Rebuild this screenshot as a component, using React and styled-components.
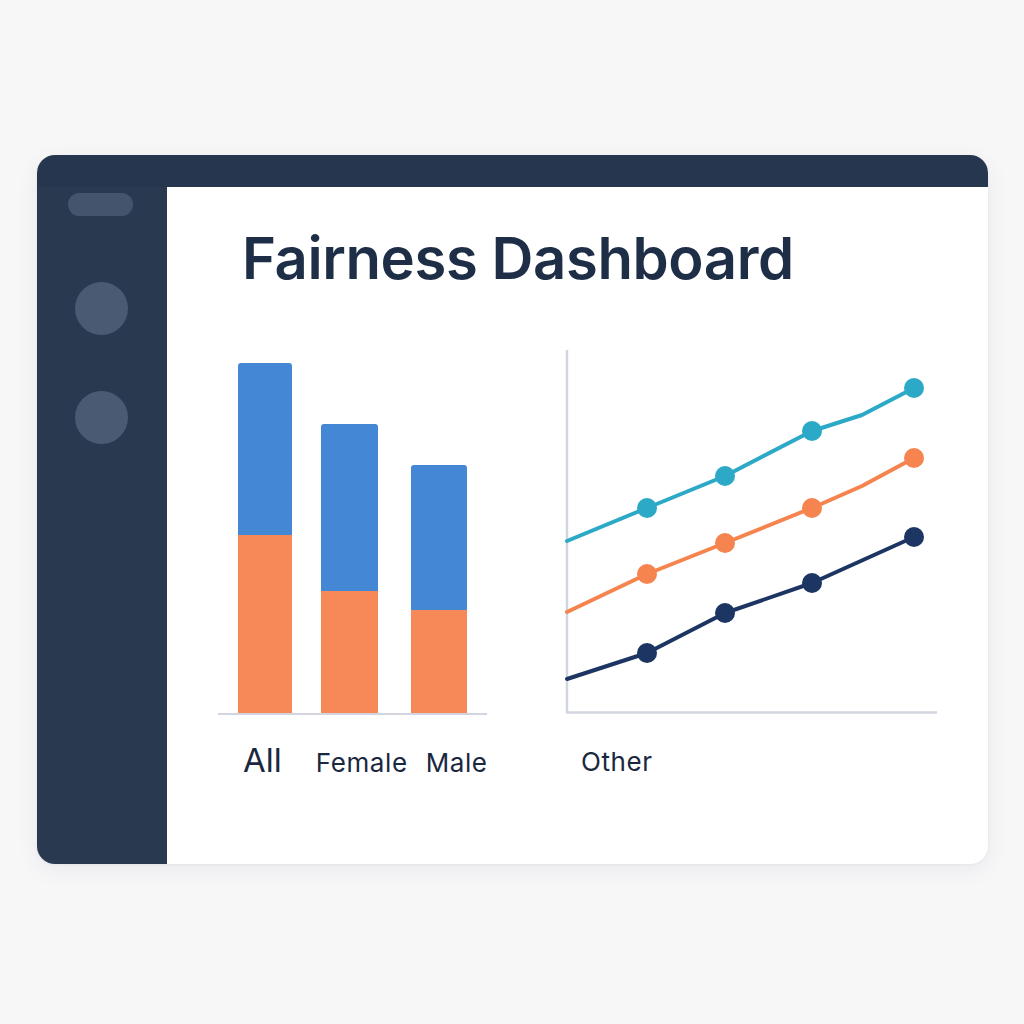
import React from 'react'
import styled, {createGlobalStyle} from 'styled-components'

const bars = [
  {label: 'All', total: 350, low: 178, width: 54, gap: 20, big: true, labelOffset: 25},
  {label: 'Female', total: 289, low: 122, width: 57, gap: 29, labelOffset: 34},
  {label: 'Male', total: 248, low: 103, width: 56, gap: 33, labelOffset: 18}
]

const series = [
  {
    color: '#2ba9c6',
    line: [[567, 541], [647, 508], [725, 476], [812, 431], [862, 415], [914, 388]],
    dots: [[647, 508], [725, 476], [812, 431], [914, 388]]
  },
  {
    color: '#f6844f',
    line: [[567, 612], [647, 574], [725, 543], [812, 508], [862, 486], [914, 458]],
    dots: [[647, 574], [725, 543], [812, 508], [914, 458]]
  },
  {
    color: '#1d3562',
    line: [[567, 679], [647, 653], [725, 613], [812, 583], [914, 537]],
    dots: [[647, 653], [725, 613], [812, 583], [914, 537]]
  }
]

export default function App() {
  return (
    <>
      <GlobalStyle />
      <Page>
        <Window>
          <TopBar />
          <Body>
            <Sidebar>
              <Pill />
              <NavDot />
              <NavDot />
            </Sidebar>
            <Content>
              <Title>Fairness Dashboard</Title>
              <ChartsRow>
                <BarColumn>
                  <BarPlot>
                    {bars.map(bar => (
                      <Bar key={bar.label} $w={bar.width} $h={bar.total} $gap={bar.gap}>
                        <BarLow $h={bar.low} />
                      </Bar>
                    ))}
                  </BarPlot>
                  <LabelRow>
                    {bars.map(bar => (
                      <Label key={bar.label} $big={bar.big} $offset={bar.labelOffset}>
                        {bar.label}
                      </Label>
                    ))}
                  </LabelRow>
                </BarColumn>
                <LineColumn>
                  <svg width="390" height="375" viewBox="560 340 390 375">
                    <line x1="567" y1="350" x2="567" y2="713" stroke="#d2d5df" strokeWidth="2.5" />
                    <line x1="566" y1="712.5" x2="937" y2="712.5" stroke="#d2d5df" strokeWidth="2.5" />
                    {series.map(s => (
                      <g key={s.color}>
                        <polyline
                          points={s.line.map(p => p.join(',')).join(' ')}
                          fill="none"
                          stroke={s.color}
                          strokeWidth="4"
                          strokeLinejoin="round"
                          strokeLinecap="round"
                        />
                        {s.dots.map(([x, y]) => (
                          <circle key={x} cx={x} cy={y} r="10" fill={s.color} />
                        ))}
                      </g>
                    ))}
                  </svg>
                  <Label $offset={21} $top={34}>Other</Label>
                </LineColumn>
              </ChartsRow>
            </Content>
          </Body>
        </Window>
      </Page>
    </>
  )
}

//styled components

const GlobalStyle = createGlobalStyle`
  body {
    margin: 0;
    background: #f7f7f8;
    font-family: 'Inter', 'Open Sans', sans-serif;
  }
`
const Page = styled.div`
  width: 1024px;
  height: 1024px;
  padding: 155px 0 0 37px;
  box-sizing: border-box;
`
const Window = styled.div`
  width: 951px;
  height: 709px;
  border-radius: 18px;
  overflow: hidden;
  background: #ffffff;
  box-shadow: 0 6px 24px rgba(30, 40, 60, 0.06), 0 1px 3px rgba(30, 40, 60, 0.05);
  display: flex;
  flex-direction: column;
`
const TopBar = styled.div`
  height: 32px;
  flex-shrink: 0;
  background: #26364e;
`
const Body = styled.div`
  flex: 1;
  display: flex;
`
const Sidebar = styled.div`
  width: 130px;
  flex-shrink: 0;
  background: #293950;
  display: flex;
  flex-direction: column;
  align-items: center;
  padding-top: 6px;
`
const Pill = styled.div`
  width: 65px;
  height: 23px;
  border-radius: 12px;
  background: #44546c;
  margin-left: -3px;
  margin-bottom: 66px;
`
const NavDot = styled.div`
  width: 53px;
  height: 53px;
  border-radius: 50%;
  background: #4a5a73;
  margin-left: -1px;
  margin-bottom: 56px;
`
const Content = styled.div`
  flex: 1;
  padding-left: 51px;
`
const Title = styled.h1`
  margin: 42px 0 0 24px;
  font-size: 58px;
  line-height: 1;
  font-weight: 600;
  color: #1f2e47;
  letter-spacing: -0.4px;
`
const ChartsRow = styled.div`
  display: flex;
  gap: 73px;
  margin-top: 53px;
`
const BarColumn = styled.div`
  width: 269px;
  display: flex;
  flex-direction: column;
`
const BarPlot = styled.div`
  height: 373px;
  display: flex;
  align-items: flex-end;
  border-bottom: 2px solid #d2d5df;
`
const Bar = styled.div`
  width: ${p => p.$w}px;
  height: ${p => p.$h}px;
  margin-left: ${p => p.$gap}px;
  background: #4387d5;
  border-radius: 3px 3px 0 0;
  display: flex;
  flex-direction: column;
  justify-content: flex-end;
`
const BarLow = styled.div`
  height: ${p => p.$h}px;
  background: #f78857;
`
const LabelRow = styled.div`
  display: flex;
  align-items: baseline;
  margin-top: 29px;
`
const Label = styled.span`
  font-size: ${p => (p.$big ? 33 : 26)}px;
  letter-spacing: ${p => (p.$big ? 0 : 0.6)}px;
  line-height: 1;
  color: #1a2740;
  margin-left: ${p => p.$offset}px;
  margin-top: ${p => p.$top || 0}px;
`
const LineColumn = styled.div`
  display: flex;
  flex-direction: column;
  align-items: flex-start;
`
